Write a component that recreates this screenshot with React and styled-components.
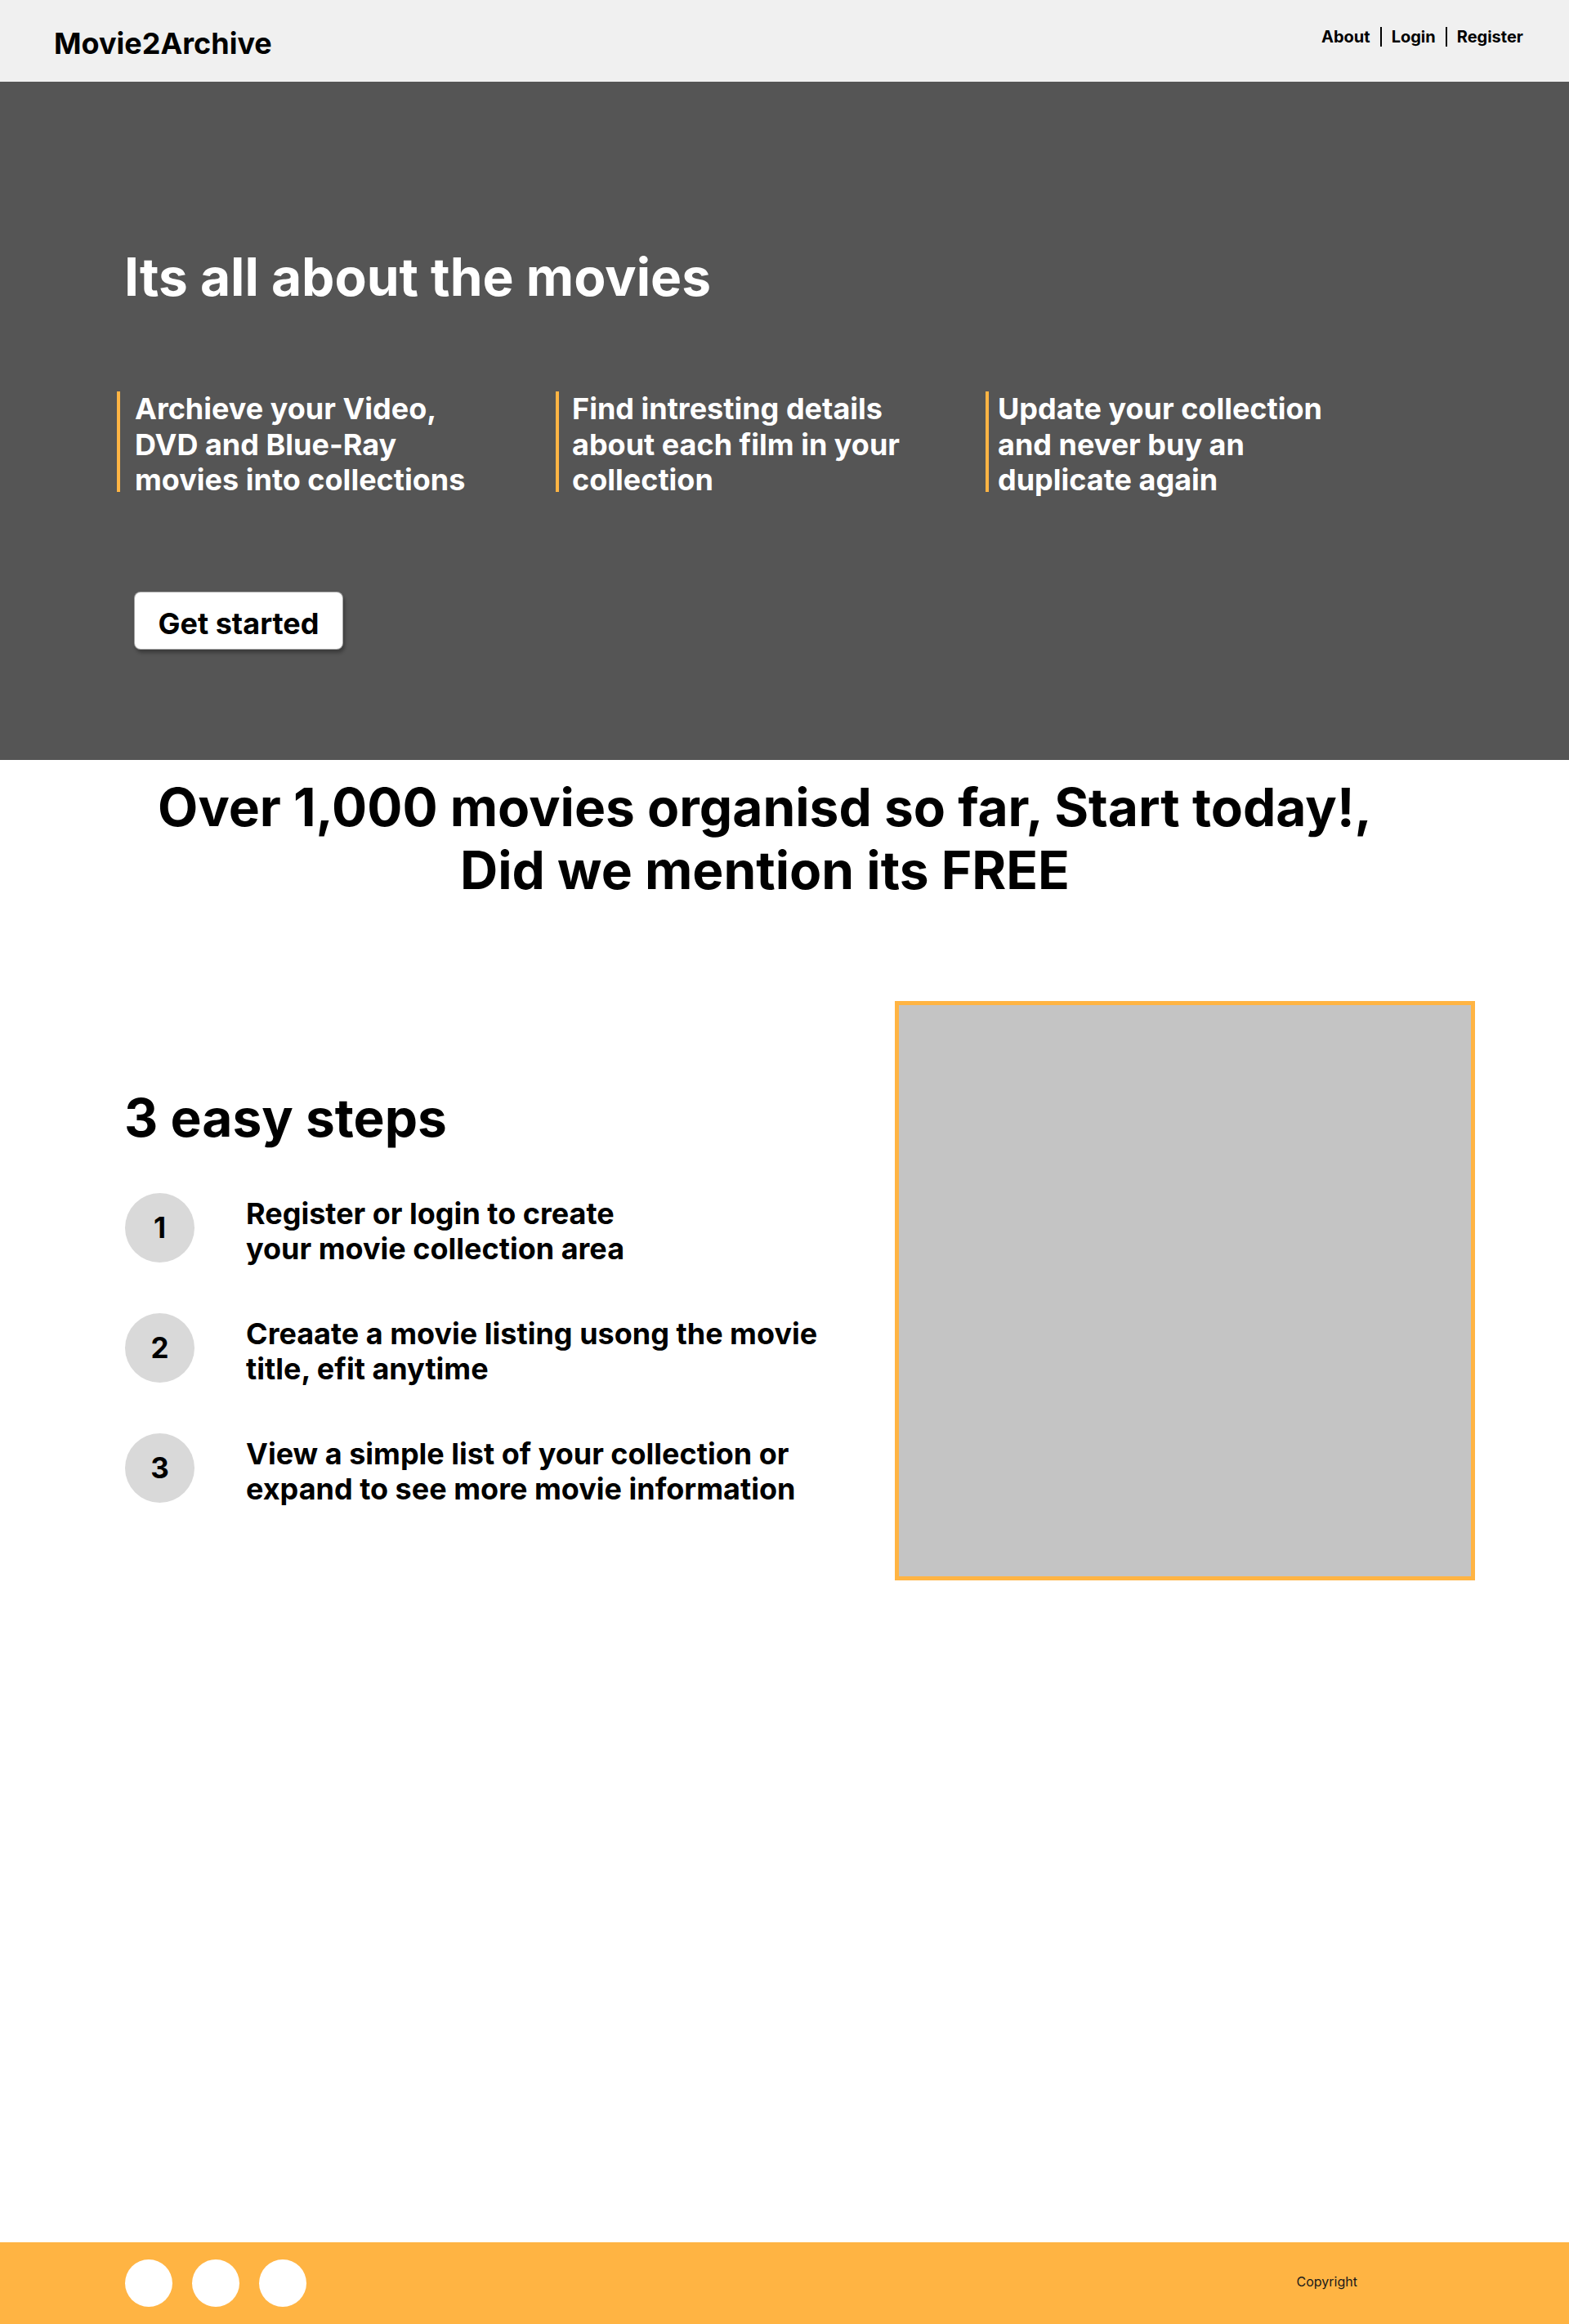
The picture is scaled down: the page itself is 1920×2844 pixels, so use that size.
import React from "react";
import { styled, createGlobalStyle } from "styled-components";

const GlobalStyle = createGlobalStyle`
  * {
    box-sizing: border-box;
  }
  body {
    margin: 0;
    font-family: Inter, "Noto Sans", sans-serif;
    color: #000;
    background: #fff;
  }
`;

const Page = styled.div`
  min-height: 2844px;
  display: flex;
  flex-direction: column;
`;

const Header = styled.header`
  height: 100px;
  background-color: #f0f0f0;
  display: flex;
  align-items: center;
  justify-content: space-between;
  padding: 0 56px 0 66px;
`;

const Logo = styled.div`
  font-size: 36px;
  font-weight: 700;
  line-height: 1;
  margin-top: 6px;
`;

const Nav = styled.nav`
  display: flex;
  align-items: center;
  margin-bottom: 10px;
`;

const NavLink = styled.a`
  font-size: 20px;
  font-weight: 700;
  color: #000;
  text-decoration: none;
  line-height: 24px;
  padding: 0 12px;
  border-left: ${(p) => (p.$first ? "none" : "2px solid #000")};

  &:last-child {
    padding-right: 0;
  }
`;

const Hero = styled.section`
  height: 830px;
  background-color: #555555;
  padding: 200px 0 0 152px;
  color: #fff;
`;

const HeroTitle = styled.h1`
  margin: 0 0 102px;
  font-size: 64px;
  font-weight: 700;
  line-height: 77px;
`;

const Features = styled.div`
  display: grid;
  grid-template-columns: 537px 526px auto;
  margin-left: -9px;
`;

const Feature = styled.div`
  display: flex;
  align-items: flex-start;
  gap: ${(p) => p.$gap}px;
`;

const Bar = styled.span`
  width: 4px;
  height: 123px;
  flex-shrink: 0;
  background-color: #ffb443;
`;

const FeatureText = styled.p`
  margin: 0;
  max-width: 430px;
  font-size: 36px;
  font-weight: 700;
  line-height: 43.5px;
`;

const StartButton = styled.button`
  margin: 114px 0 0 12px;
  width: 256px;
  height: 71px;
  padding: 8px 0 0;
  background: #fff;
  border: 1px solid rgba(0, 0, 0, 0.35);
  border-radius: 8px;
  box-shadow: 2px 4px 4px rgba(0, 0, 0, 0.3);
  font-family: Inter, sans-serif;
  font-size: 36px;
  font-weight: 700;
  color: #000;
  cursor: pointer;
`;

const Tagline = styled.h2`
  margin: 20px 0 0;
  padding-right: 48px;
  text-align: center;
  font-size: 64px;
  font-weight: 700;
  line-height: 76.8px;
`;

const StepsSection = styled.section`
  margin-top: 121px;
  display: flex;
  align-items: center;
  justify-content: space-between;
  padding: 0 115px 0 152px;
`;

const StepsColumn = styled.div`
  display: flex;
  flex-direction: column;
  margin-top: 10px;
`;

const StepsTitle = styled.h3`
  margin: 0 0 53px;
  font-size: 64px;
  font-weight: 700;
  line-height: 77px;
`;

const StepList = styled.ol`
  list-style: none;
  margin: 0;
  padding: 0;
  display: flex;
  flex-direction: column;
  gap: 60px;
`;

const Step = styled.li`
  display: flex;
  align-items: center;
  gap: 63px;
`;

const StepNumber = styled.span`
  width: 85px;
  height: 85px;
  flex-shrink: 0;
  margin-left: 1px;
  border-radius: 50%;
  background-color: #d9d9d9;
  display: flex;
  align-items: center;
  justify-content: center;
  font-size: 35px;
  font-weight: 700;
`;

const StepText = styled.p`
  margin: 5px 0 -5px;
  max-width: 760px;
  font-size: 36px;
  font-weight: 700;
  line-height: 43.5px;
`;

const Picture = styled.div`
  width: 710px;
  height: 709px;
  background-color: #c4c4c4;
  border: 5px solid #ffb443;
`;

const Footer = styled.footer`
  margin-top: auto;
  height: 100px;
  background-color: #ffb443;
  display: flex;
  align-items: center;
  justify-content: space-between;
  padding: 0 259px 0 153px;
`;

const Socials = styled.div`
  display: flex;
  gap: 24px;
`;

const SocialDot = styled.span`
  width: 58px;
  height: 58px;
  border-radius: 50%;
  background-color: #fff;
`;

const Copyright = styled.span`
  font-size: 16px;
  color: #1a1a1a;
  margin-bottom: 4px;
`;

const features = [
  { text: "Archieve your Video, DVD and Blue-Ray movies into collections", gap: 18 },
  { text: "Find intresting details about each film in your collection", gap: 16 },
  { text: "Update your collection and never buy an duplicate again", gap: 11 },
];

const steps = [
  <>
    Register or login to create
    <br />
    your movie collection area
  </>,
  "Creaate a movie listing usong the movie title, efit anytime",
  "View a simple list of your collection or expand to see more movie information",
];

const App = () => {
  return (
    <>
      <GlobalStyle />
      <Page>
        <Header>
          <Logo>Movie2Archive</Logo>
          <Nav>
            <NavLink $first href="#about">
              About
            </NavLink>
            <NavLink href="#login">Login</NavLink>
            <NavLink href="#register">Register</NavLink>
          </Nav>
        </Header>

        <Hero>
          <HeroTitle>Its all about the movies</HeroTitle>
          <Features>
            {features.map((f) => (
              <Feature key={f.text} $gap={f.gap}>
                <Bar />
                <FeatureText>{f.text}</FeatureText>
              </Feature>
            ))}
          </Features>
          <StartButton>Get started</StartButton>
        </Hero>

        <Tagline>
          Over 1,000 movies organisd so far, Start today!,
          <br />
          Did we mention its FREE
        </Tagline>

        <StepsSection>
          <StepsColumn>
            <StepsTitle>3 easy steps</StepsTitle>
            <StepList>
              {steps.map((text, i) => (
                <Step key={i}>
                  <StepNumber>{i + 1}</StepNumber>
                  <StepText>{text}</StepText>
                </Step>
              ))}
            </StepList>
          </StepsColumn>
          <Picture />
        </StepsSection>

        <Footer>
          <Socials>
            <SocialDot />
            <SocialDot />
            <SocialDot />
          </Socials>
          <Copyright>Copyright</Copyright>
        </Footer>
      </Page>
    </>
  );
};

export default App;
